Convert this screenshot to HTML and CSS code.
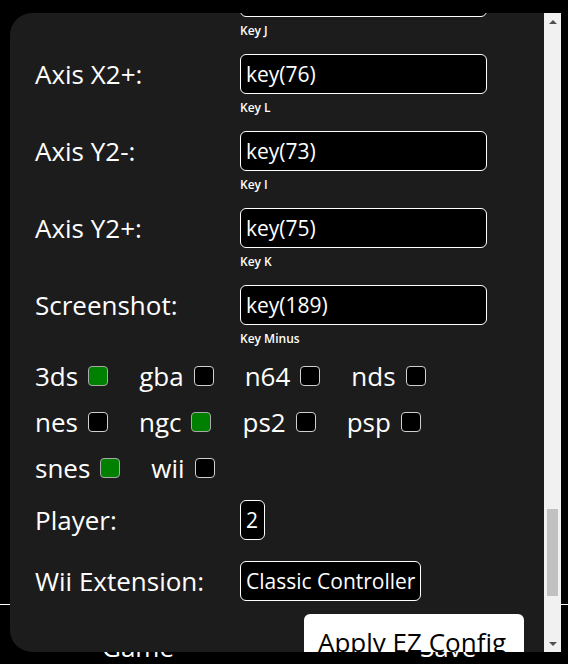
FILE: index.html
```html
<!DOCTYPE html>
<html lang="en">
<head>
<meta charset="utf-8">
<title>EZ Config</title>
<link rel="stylesheet" href="styles.css">
</head>
<body>
<div class="page">
  <nav class="bottom-nav">
    <span class="nav-item">Game</span>
    <span class="nav-item">Save</span>
  </nav>
</div>

<div class="modal">
  <div class="modal-body">
    <div class="scroll-content">
      <div class="row">
        <div class="label">Axis X2-:</div>
        <div class="field"><div class="input">key(74)</div><div class="hint">Key J</div></div>
      </div>
      <div class="row">
        <div class="label">Axis X2+:</div>
        <div class="field"><div class="input">key(76)</div><div class="hint">Key L</div></div>
      </div>
      <div class="row">
        <div class="label">Axis Y2-:</div>
        <div class="field"><div class="input">key(73)</div><div class="hint">Key I</div></div>
      </div>
      <div class="row">
        <div class="label">Axis Y2+:</div>
        <div class="field"><div class="input">key(75)</div><div class="hint">Key K</div></div>
      </div>
      <div class="row">
        <div class="label">Screenshot:</div>
        <div class="field"><div class="input">key(189)</div><div class="hint">Key Minus</div></div>
      </div>

      <div class="systems">
        <div class="sys">3ds <span class="cb on"></span></div>
        <div class="sys">gba <span class="cb"></span></div>
        <div class="sys">n64 <span class="cb"></span></div>
        <div class="sys">nds <span class="cb"></span></div>
        <div class="sys">nes <span class="cb"></span></div>
        <div class="sys">ngc <span class="cb on"></span></div>
        <div class="sys">ps2 <span class="cb"></span></div>
        <div class="sys">psp <span class="cb"></span></div>
        <div class="sys">snes <span class="cb on"></span></div>
        <div class="sys">wii <span class="cb"></span></div>
      </div>

      <div class="row row-select row-player">
        <div class="label">Player:</div>
        <div class="field"><div class="select select-small">2</div></div>
      </div>
      <div class="row row-select row-ext">
        <div class="label">Wii Extension:</div>
        <div class="field"><div class="select">Classic Controller</div></div>
      </div>

      <div class="actions">
        <button class="apply">Apply EZ Config</button>
      </div>
    </div>
  </div>
  <div class="scrollbar">
    <div class="sb-btn"><span class="arrow-up"></span></div>
    <div class="sb-track"><div class="sb-thumb"></div></div>
    <div class="sb-btn"><span class="arrow-down"></span></div>
  </div>
</div>
</body>
</html>
```

FILE: styles.css
```css
* { box-sizing: border-box; }

html, body {
  margin: 0;
  padding: 0;
}

body {
  width: 568px;
  height: 664px;
  overflow: hidden;
  position: relative;
  background: #000;
  color: #fff;
  font-family: "Open Sans", "Noto Sans", sans-serif;
}

.page {
  height: 664px;
  display: flex;
  flex-direction: column;
  justify-content: flex-end;
}

.bottom-nav {
  height: 60px;
  border-top: 1px solid #fff;
  display: flex;
  gap: 246px;
  padding: 25px 0 0 102px;
  font-size: 26px;
  line-height: 35px;
}

.modal {
  position: absolute;
  left: 10px;
  top: 13px;
  width: 551px;
  height: 639px;
  background: #1c1c1c;
  border-radius: 22px 0 0 22px;
  display: flex;
  overflow: hidden;
}

.modal-body {
  flex: 1;
  overflow: hidden;
  padding: 0 20px 0 25px;
}

.scroll-content {
  margin-top: -36px;
}

.row {
  display: grid;
  grid-template-columns: 205px 1fr;
  margin-bottom: 15px;
}

.label {
  height: 40px;
  display: flex;
  align-items: center;
  font-size: 26px;
  white-space: nowrap;
}

.input {
  width: 247px;
  height: 40px;
  border: 1px solid #fff;
  border-radius: 6px;
  background: #000;
  display: flex;
  align-items: center;
  padding: 0 5px;
  font-size: 21px;
}

.hint {
  margin-top: 6px;
  font-size: 12px;
  line-height: 16px;
  font-weight: 600;
}

.systems {
  display: flex;
  flex-wrap: wrap;
  column-gap: 31px;
  row-gap: 18px;
}

.sys {
  height: 28px;
  display: flex;
  align-items: center;
  gap: 10px;
  font-size: 26px;
}

.cb {
  width: 20px;
  height: 20px;
  border: 1px solid #d0d0d0;
  border-radius: 4px;
  background: #000;
}

.cb.on {
  background: #008000;
  border-color: #a8a8a8;
}

.row-player {
  margin-top: 18px;
  margin-bottom: 21px;
}

.row-ext {
  margin-bottom: 13px;
}

.select {
  display: inline-flex;
  align-items: center;
  height: 40px;
  border: 1px solid #fff;
  border-radius: 6px;
  background: #000;
  padding: 0 5px;
  font-size: 21px;
  white-space: nowrap;
}

.select-small {
  width: 25px;
}

.actions {
  display: flex;
  justify-content: flex-end;
}

.apply {
  width: 220px;
  height: 50px;
  border: none;
  border-radius: 6px;
  background: #fff;
  color: #000;
  font-family: inherit;
  font-size: 26px;
  text-align: left;
  padding: 7px 0 0 14px;
  align-self: flex-start;
  display: block;
  line-height: 35px;
}

.scrollbar {
  width: 17px;
  flex-shrink: 0;
  background: #f1f1f1;
  display: flex;
  flex-direction: column;
}

.sb-btn {
  height: 17px;
  display: flex;
  align-items: center;
  justify-content: center;
}

.sb-track {
  flex: 1;
}

.sb-thumb {
  margin: 479px 3px 0;
  height: 87px;
  background: #c1c1c1;
}

.arrow-up, .arrow-down {
  width: 0;
  height: 0;
  border-left: 4px solid transparent;
  border-right: 4px solid transparent;
}

.arrow-up { border-bottom: 4px solid #505050; }
.arrow-down { border-top: 4px solid #505050; }
```
